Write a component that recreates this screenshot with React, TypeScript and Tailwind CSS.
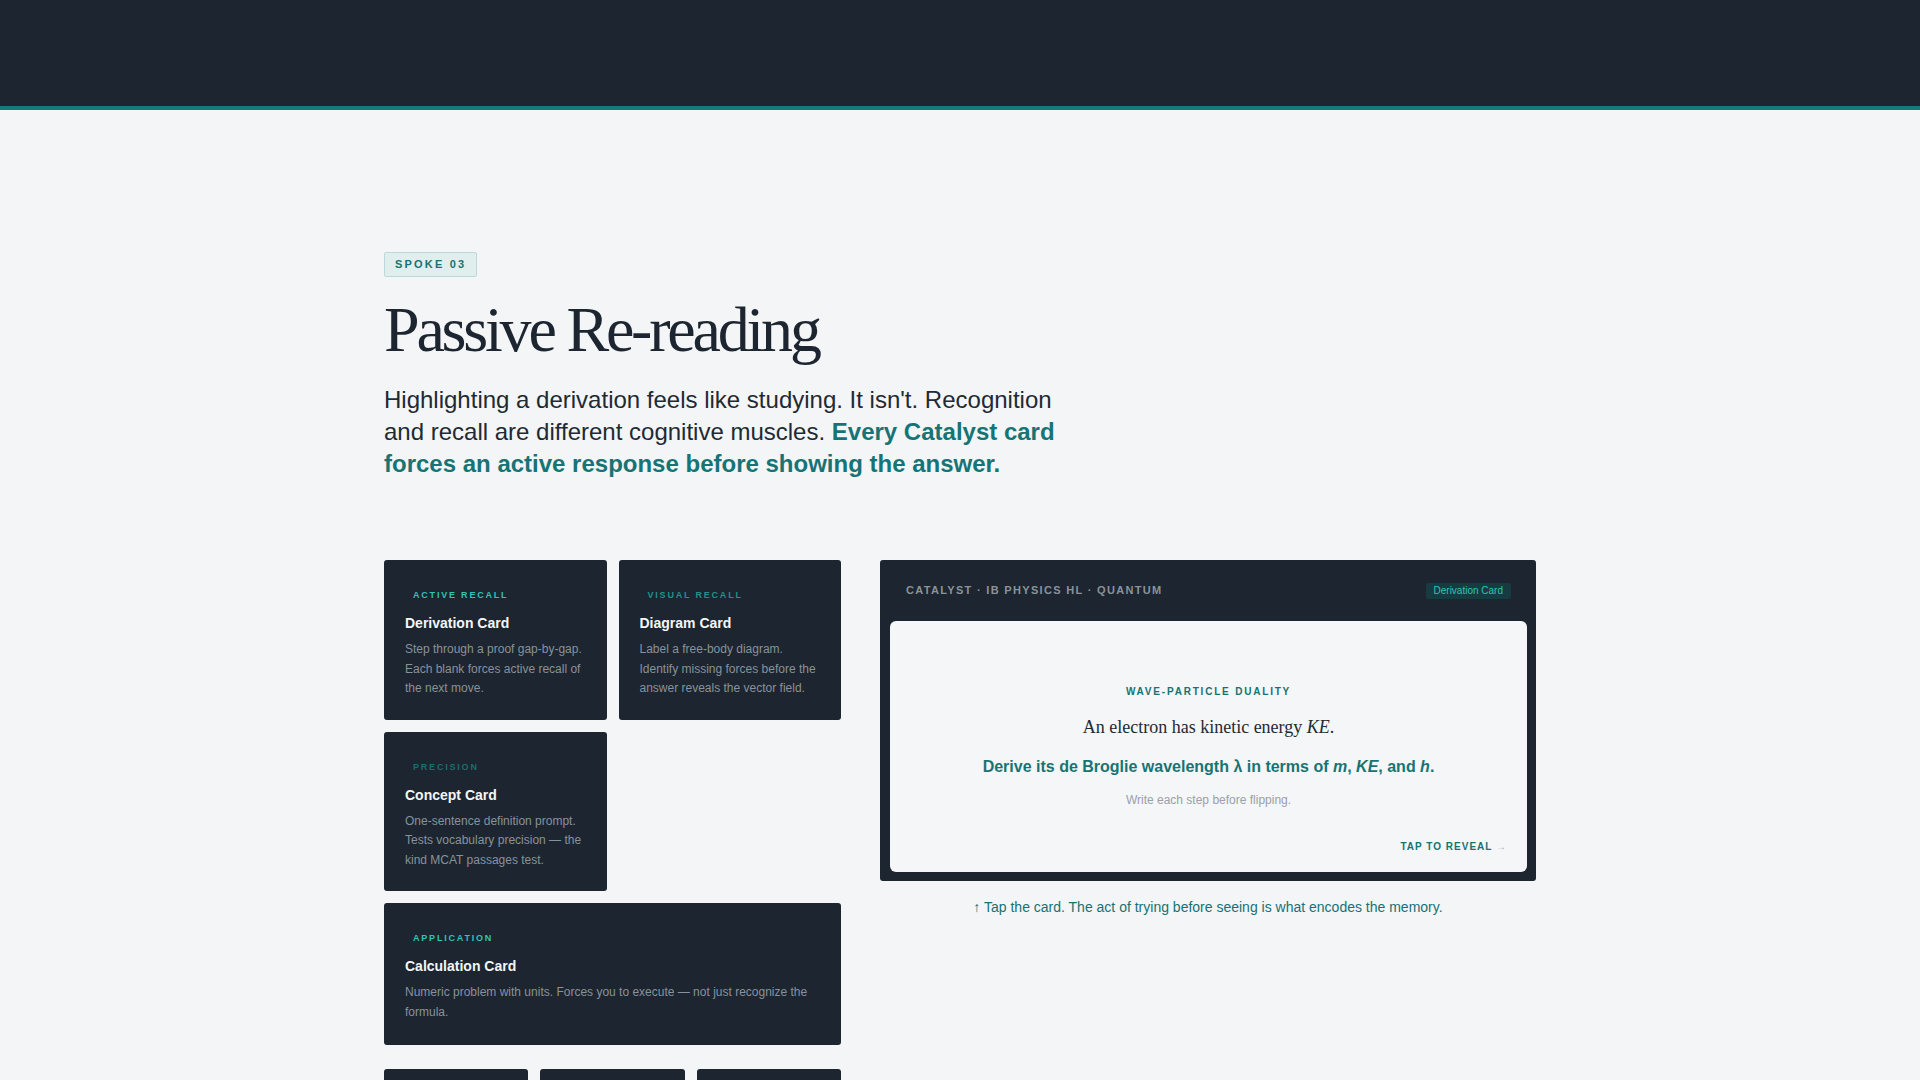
const sans = "font-['Liberation_Sans',Arial,sans-serif]";
const serif = "font-['Liberation_Serif','Times_New_Roman',serif]";

type CardType = {
  label: string;
  labelClass: string;
  title: string;
  desc: string;
};

const derivation: CardType = {
  label: "Active Recall",
  labelClass: "text-[#2ec4b6]",
  title: "Derivation Card",
  desc: "Step through a proof gap-by-gap. Each blank forces active recall of the next move.",
};

const diagram: CardType = {
  label: "Visual Recall",
  labelClass: "text-[#21918b]",
  title: "Diagram Card",
  desc: "Label a free-body diagram. Identify missing forces before the answer reveals the vector field.",
};

const concept: CardType = {
  label: "Precision",
  labelClass: "text-[#1b6f6d]",
  title: "Concept Card",
  desc: "One-sentence definition prompt. Tests vocabulary precision — the kind MCAT passages test.",
};

const calculation: CardType = {
  label: "Application",
  labelClass: "text-[#2ec4b6]",
  title: "Calculation Card",
  desc: "Numeric problem with units. Forces you to execute — not just recognize the formula.",
};

function TypeCard({ card, tall }: { card: CardType; tall?: boolean }) {
  return (
    <article className={`rounded-[3px] bg-[#1c2530] px-[21px] pt-5 ${tall ? "pb-[23px]" : "pb-[21px]"}`}>
      <p className={`px-2 pt-[9px] text-[9px] font-bold uppercase leading-3 tracking-[0.2em] ${card.labelClass}`}>
        {card.label}
      </p>
      <h3 className="mt-3 text-[14px] font-bold leading-5 text-[#f4f6f8]">{card.title}</h3>
      <p className="mt-[7px] text-[12px] leading-[19.5px] text-[#89929b]">{card.desc}</p>
    </article>
  );
}

export default function App() {
  return (
    <div className={`min-h-screen bg-[#f3f5f7] ${sans}`}>
      <header className="h-[110px] border-b-4 border-[#177a7a] bg-[#1c2530]" />

      <main className="mx-auto max-w-6xl pt-[141px] pb-10">
        <span className="inline-block rounded-[2px] border border-[#bcd8d8] bg-[#e1eeee] px-[10px] py-[5px] text-[11px] font-bold leading-[13px] tracking-[0.2em] text-[#177272]">
          SPOKE 03
        </span>

        <h1 className={`mt-[21px] text-[64px] leading-none tracking-[-0.05em] text-[#1c2530] ${serif}`}>
          Passive Re-reading
        </h1>

        <p className="mt-[22px] max-w-[690px] text-[24px] leading-8 text-[#1f2a33]">
          Highlighting a derivation feels like studying. It isn't. Recognition and recall are different cognitive
          muscles.{" "}
          <strong className="font-bold text-[#167474]">
            Every Catalyst card forces an active response before showing the answer.
          </strong>
        </p>

        <section className="mt-[80px] grid grid-cols-[457px_1fr] gap-[39px]">
          <div>
            <div className="flex flex-col gap-3">
              <div className="grid grid-cols-2 gap-3">
                <TypeCard card={derivation} />
                <TypeCard card={diagram} />
              </div>
              <div className="grid grid-cols-2 gap-3">
                <TypeCard card={concept} />
              </div>
              <TypeCard card={calculation} tall />
            </div>
            <div className="mt-[24px] grid grid-cols-3 gap-3">
              <div className="h-24 rounded-[3px] bg-[#1c2530]" />
              <div className="h-24 rounded-[3px] bg-[#1c2530]" />
              <div className="h-24 rounded-[3px] bg-[#1c2530]" />
            </div>
          </div>

          <div>
            <div className="rounded-[3px] bg-[#1c2530] pr-[9px] pb-[9px] pl-[10px]">
              <div className="flex h-[61px] items-center justify-between pr-4 pl-4">
                <span className="text-[11px] font-bold tracking-[0.12em] text-[#8a939b]">
                  CATALYST · IB PHYSICS HL · QUANTUM
                </span>
                <span className="rounded-[2px] bg-[#173b40] px-2 py-[2px] text-[10px] leading-3 text-[#2ec4b6]">
                  Derivation Card
                </span>
              </div>
              <div className="rounded-md bg-[#f4f6f8] px-5 pt-[63px] pb-[17px] text-center">
                <p className="text-[10px] font-bold leading-4 tracking-[0.18em] text-[#177272]">
                  WAVE-PARTICLE DUALITY
                </p>
                <p className={`mt-[13px] text-[18px] leading-7 text-[#1f2a33] ${serif}`}>
                  An electron has kinetic energy <i>KE</i>.
                </p>
                <p className="mt-[14px] text-[16px] font-bold leading-6 text-[#177474]">
                  Derive its de Broglie wavelength λ in terms of <i>m</i>, <i>KE</i>, and <i>h</i>.
                </p>
                <p className="mt-[13px] text-[12px] leading-4 text-[#9aa1a7]">Write each step before flipping.</p>
                <p className="mt-[31px] text-right text-[10px] font-bold leading-4 tracking-[0.1em] text-[#177272]">
                  TAP TO REVEAL <span className="font-normal text-[#a3b0b3]">→</span>
                </p>
              </div>
            </div>
            <p className="mt-[16px] text-center text-[14px] leading-5 text-[#177272]">
              ↑ Tap the card. The act of trying before seeing is what encodes the memory.
            </p>
          </div>
        </section>
      </main>
    </div>
  );
}
